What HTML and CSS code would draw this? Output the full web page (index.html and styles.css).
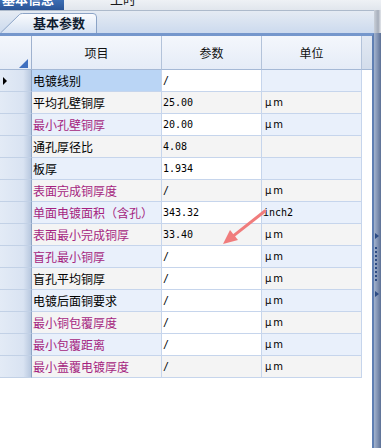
FILE: index.html
```html
<!DOCTYPE html>
<html lang="zh">
<head>
<meta charset="utf-8">
<link rel="stylesheet" href="styles.css">
</head>
<body>
<div class="topbar">
  <div class="toptab active"><span>基本信息</span></div>
  <div class="toptab other"><span>工时</span></div>
</div>
<div class="main">
  <div class="content">
    <div class="tabstrip">
      <div class="tab">
        <svg class="tab-shape" width="97" height="20" viewBox="0 0 97 20">
          <defs>
            <linearGradient id="tg" x1="0" y1="0" x2="0" y2="1">
              <stop offset="0" stop-color="#fbfcfe"/>
              <stop offset="1" stop-color="#d6e2f3"/>
            </linearGradient>
          </defs>
          <path d="M0.5,20 L19.5,1.5 Q20.5,0.5 22.5,0.5 L93,0.5 Q96.5,0.5 96.5,4 L96.5,20" fill="url(#tg)" stroke="#8ba3c6" stroke-width="1"/>
        </svg>
        <span class="tab-label">基本参数</span>
      </div>
    </div>
    <div class="panel">
      <div class="grid">
        <div class="cell hd corner"><i class="corner-tri"></i></div>
        <div class="cell hd">项目</div>
        <div class="cell hd">参数</div>
        <div class="cell hd">单位</div>
        <div class="cell hd filler"></div>

        <div class="cell rh"><i class="cur-tri"></i></div>
        <div class="cell c1 sel">电镀线别</div>
        <div class="cell c2 w num">/</div>
        <div class="cell c3 a"></div>
        <div class="cell blank"></div>

        <div class="cell rh"></div>
        <div class="cell c1 g">平均孔壁铜厚</div>
        <div class="cell c2 g num">25.00</div>
        <div class="cell c3 g unit">μm</div>
        <div class="cell blank"></div>

        <div class="cell rh"></div>
        <div class="cell c1 a pk">最小孔壁铜厚</div>
        <div class="cell c2 w num">20.00</div>
        <div class="cell c3 a unit">μm</div>
        <div class="cell blank"></div>

        <div class="cell rh"></div>
        <div class="cell c1 g">通孔厚径比</div>
        <div class="cell c2 g num">4.08</div>
        <div class="cell c3 g"></div>
        <div class="cell blank"></div>

        <div class="cell rh"></div>
        <div class="cell c1 a">板厚</div>
        <div class="cell c2 w num">1.934</div>
        <div class="cell c3 a"></div>
        <div class="cell blank"></div>

        <div class="cell rh"></div>
        <div class="cell c1 g pk">表面完成铜厚度</div>
        <div class="cell c2 g num">/</div>
        <div class="cell c3 g unit">μm</div>
        <div class="cell blank"></div>

        <div class="cell rh"></div>
        <div class="cell c1 a pk">单面电镀面积（含孔）</div>
        <div class="cell c2 w num">343.32</div>
        <div class="cell c3 a num inch">inch2</div>
        <div class="cell blank"></div>

        <div class="cell rh"></div>
        <div class="cell c1 g pk">表面最小完成铜厚</div>
        <div class="cell c2 g num">33.40</div>
        <div class="cell c3 g unit">μm</div>
        <div class="cell blank"></div>

        <div class="cell rh"></div>
        <div class="cell c1 a pk">盲孔最小铜厚</div>
        <div class="cell c2 w num">/</div>
        <div class="cell c3 a unit">μm</div>
        <div class="cell blank"></div>

        <div class="cell rh"></div>
        <div class="cell c1 g">盲孔平均铜厚</div>
        <div class="cell c2 w num">/</div>
        <div class="cell c3 g unit">μm</div>
        <div class="cell blank"></div>

        <div class="cell rh"></div>
        <div class="cell c1 a">电镀后面铜要求</div>
        <div class="cell c2 w num">/</div>
        <div class="cell c3 a unit">μm</div>
        <div class="cell blank"></div>

        <div class="cell rh"></div>
        <div class="cell c1 g pk">最小铜包覆厚度</div>
        <div class="cell c2 w num">/</div>
        <div class="cell c3 g unit">μm</div>
        <div class="cell blank"></div>

        <div class="cell rh"></div>
        <div class="cell c1 a pk">最小包覆距离</div>
        <div class="cell c2 w num">/</div>
        <div class="cell c3 a unit">μm</div>
        <div class="cell blank"></div>

        <div class="cell rh"></div>
        <div class="cell c1 g pk">最小盖覆电镀厚度</div>
        <div class="cell c2 g num">/</div>
        <div class="cell c3 g unit">μm</div>
        <div class="cell blank"></div>
      </div>
      <svg class="arrow" width="55" height="45" viewBox="0 0 55 45">
        <line x1="50" y1="8" x2="19" y2="32.4" stroke="#f07c7c" stroke-width="3" stroke-linecap="round"/>
        <polygon points="8,41 23,37 15,27" fill="#f07c7c"/>
      </svg>
    </div>
  </div>
  <div class="splitter">
    <div class="split-top"></div>
    <div class="split-body">
      <i class="split-tri first"></i>
      <i class="split-dots"></i>
      <i class="split-tri"></i>
    </div>
  </div>
</div>
</body>
</html>
```

FILE: styles.css
```css
html, body {
  margin: 0;
  padding: 0;
}
body {
  width: 381px;
  height: 448px;
  overflow: hidden;
  background: #ffffff;
  font-family: "Noto Sans CJK SC", "Noto Sans", sans-serif;
  font-size: 12px;
  color: #000;
}

/* top tab bar (cut off) */
.topbar {
  height: 10px;
  display: flex;
  overflow: hidden;
  background: linear-gradient(#eef1f5, #e1e6ed);
}
.toptab {
  height: 10px;
  overflow: hidden;
}
.toptab span {
  display: block;
  margin-top: -9px;
  line-height: 16px;
  font-size: 13px;
  font-weight: bold;
}
.toptab.active {
  width: 64px;
  background: linear-gradient(#3c6eb4, #2a5597);
  color: #ffffff;
}
.toptab.active span {
  padding-left: 2px;
}
.toptab.other {
  margin-left: 46px;
  color: #1a1a1a;
}
.toptab.other span {
  font-weight: normal;
}

.main {
  display: flex;
  height: 438px;
}
.content {
  width: 374px;
  display: flex;
  flex-direction: column;
}

/* page tab strip */
.tabstrip {
  height: 22px;
  border-top: 1px solid #adbacb;
  background: linear-gradient(#e5ebf3, #ccdaee);
  display: flex;
  align-items: flex-end;
}
.tab {
  position: relative;
  width: 97px;
  height: 20px;
  display: flex;
  align-items: center;
  justify-content: flex-end;
}
.tab-shape {
  position: absolute;
  left: 0;
  top: 0;
}
.tab-label {
  position: relative;
  margin-right: 12px;
  font-size: 13px;
  font-weight: bold;
  color: #101c30;
  line-height: 16px;
}

/* grid panel */
.panel {
  position: relative;
  flex: 1;
  border-top: 3px solid #7597cc;
  border-right: 2px solid #5f7fb3;
  background: #ffffff;
}
.grid {
  display: grid;
  grid-template-columns: 32px 130px 100px 100px 10px;
  grid-template-rows: 34px;
  grid-auto-rows: 22px;
}
.cell {
  box-sizing: border-box;
  border-right: 1px solid #c6d5ec;
  border-bottom: 1px solid #c6d5ec;
  white-space: nowrap;
  overflow: hidden;
  display: flex;
  align-items: center;
  line-height: 14px;
}
.hd {
  justify-content: center;
  background: linear-gradient(#f4f7fc, #e5ecf7);
  border-right-color: #b3c3da;
  border-bottom-color: #a5b9d6;
  color: #111111;
}
.hd.filler {
  background: linear-gradient(#e2e9f3, #d3ddeb);
  border-right: none;
}
.hd.corner {
  align-items: flex-end;
  justify-content: flex-end;
  padding: 0 3px 1px 0;
  border-right-color: #9fb2cf;
}
.corner-tri {
  display: block;
  width: 0;
  height: 0;
  border-left: 9px solid transparent;
  border-bottom: 9px solid #3f6fbf;
}
.rh {
  background: linear-gradient(to right, #e3ebf6, #d9e3f2 75%, #b8c8df);
  border-right-color: #8ea5c5;
  border-bottom-color: #c2d1e6;
}
.cur-tri {
  display: block;
  width: 0;
  height: 0;
  margin-left: 3px;
  border-left: 4px solid #000000;
  border-top: 4px solid transparent;
  border-bottom: 4px solid transparent;
}
.blank {
  border: none;
  background: #ffffff;
}
.c1 {
  padding-left: 1px;
}
.c2 {
  padding-left: 1px;
}
.c3 {
  padding-left: 3px;
}
.a {
  background: #e9f0fb;
}
.g {
  background: #f4f4f4;
}
.w {
  background: #ffffff;
}
.sel {
  background: #bad5f5;
}
.pk {
  color: #a51f80;
}
.num {
  font-family: "DejaVu Sans Mono", "Liberation Mono", monospace;
  font-size: 10px;
}
.inch {
  padding-left: 1px;
}
.unit {
  font-family: "DejaVu Sans", sans-serif;
  font-size: 10px;
  letter-spacing: 2px;
}

.arrow {
  position: absolute;
  left: 215px;
  top: 167px;
}

/* splitter on the right */
.splitter {
  width: 7px;
  display: flex;
  flex-direction: column;
}
.split-top {
  height: 23px;
  background: linear-gradient(to right, #c9cfd8, #a6aebb 60%, #e4e7ec);
}
.split-body {
  flex: 1;
  display: flex;
  flex-direction: column;
  background: linear-gradient(to right, #a3b3cd, #8193b4 50%, #5d7196);
}
.split-tri {
  display: block;
  width: 0;
  height: 0;
  margin-left: 1px;
  margin-top: 8px;
  border-left: 4px solid #2d4c84;
  border-top: 3px solid transparent;
  border-bottom: 3px solid transparent;
}
.split-tri.first {
  margin-top: 200px;
}
.split-dots {
  display: block;
  width: 2px;
  height: 36px;
  margin-left: 1px;
  margin-top: 8px;
  background: repeating-linear-gradient(#2d4c84 0 2px, transparent 2px 4px);
}
```
